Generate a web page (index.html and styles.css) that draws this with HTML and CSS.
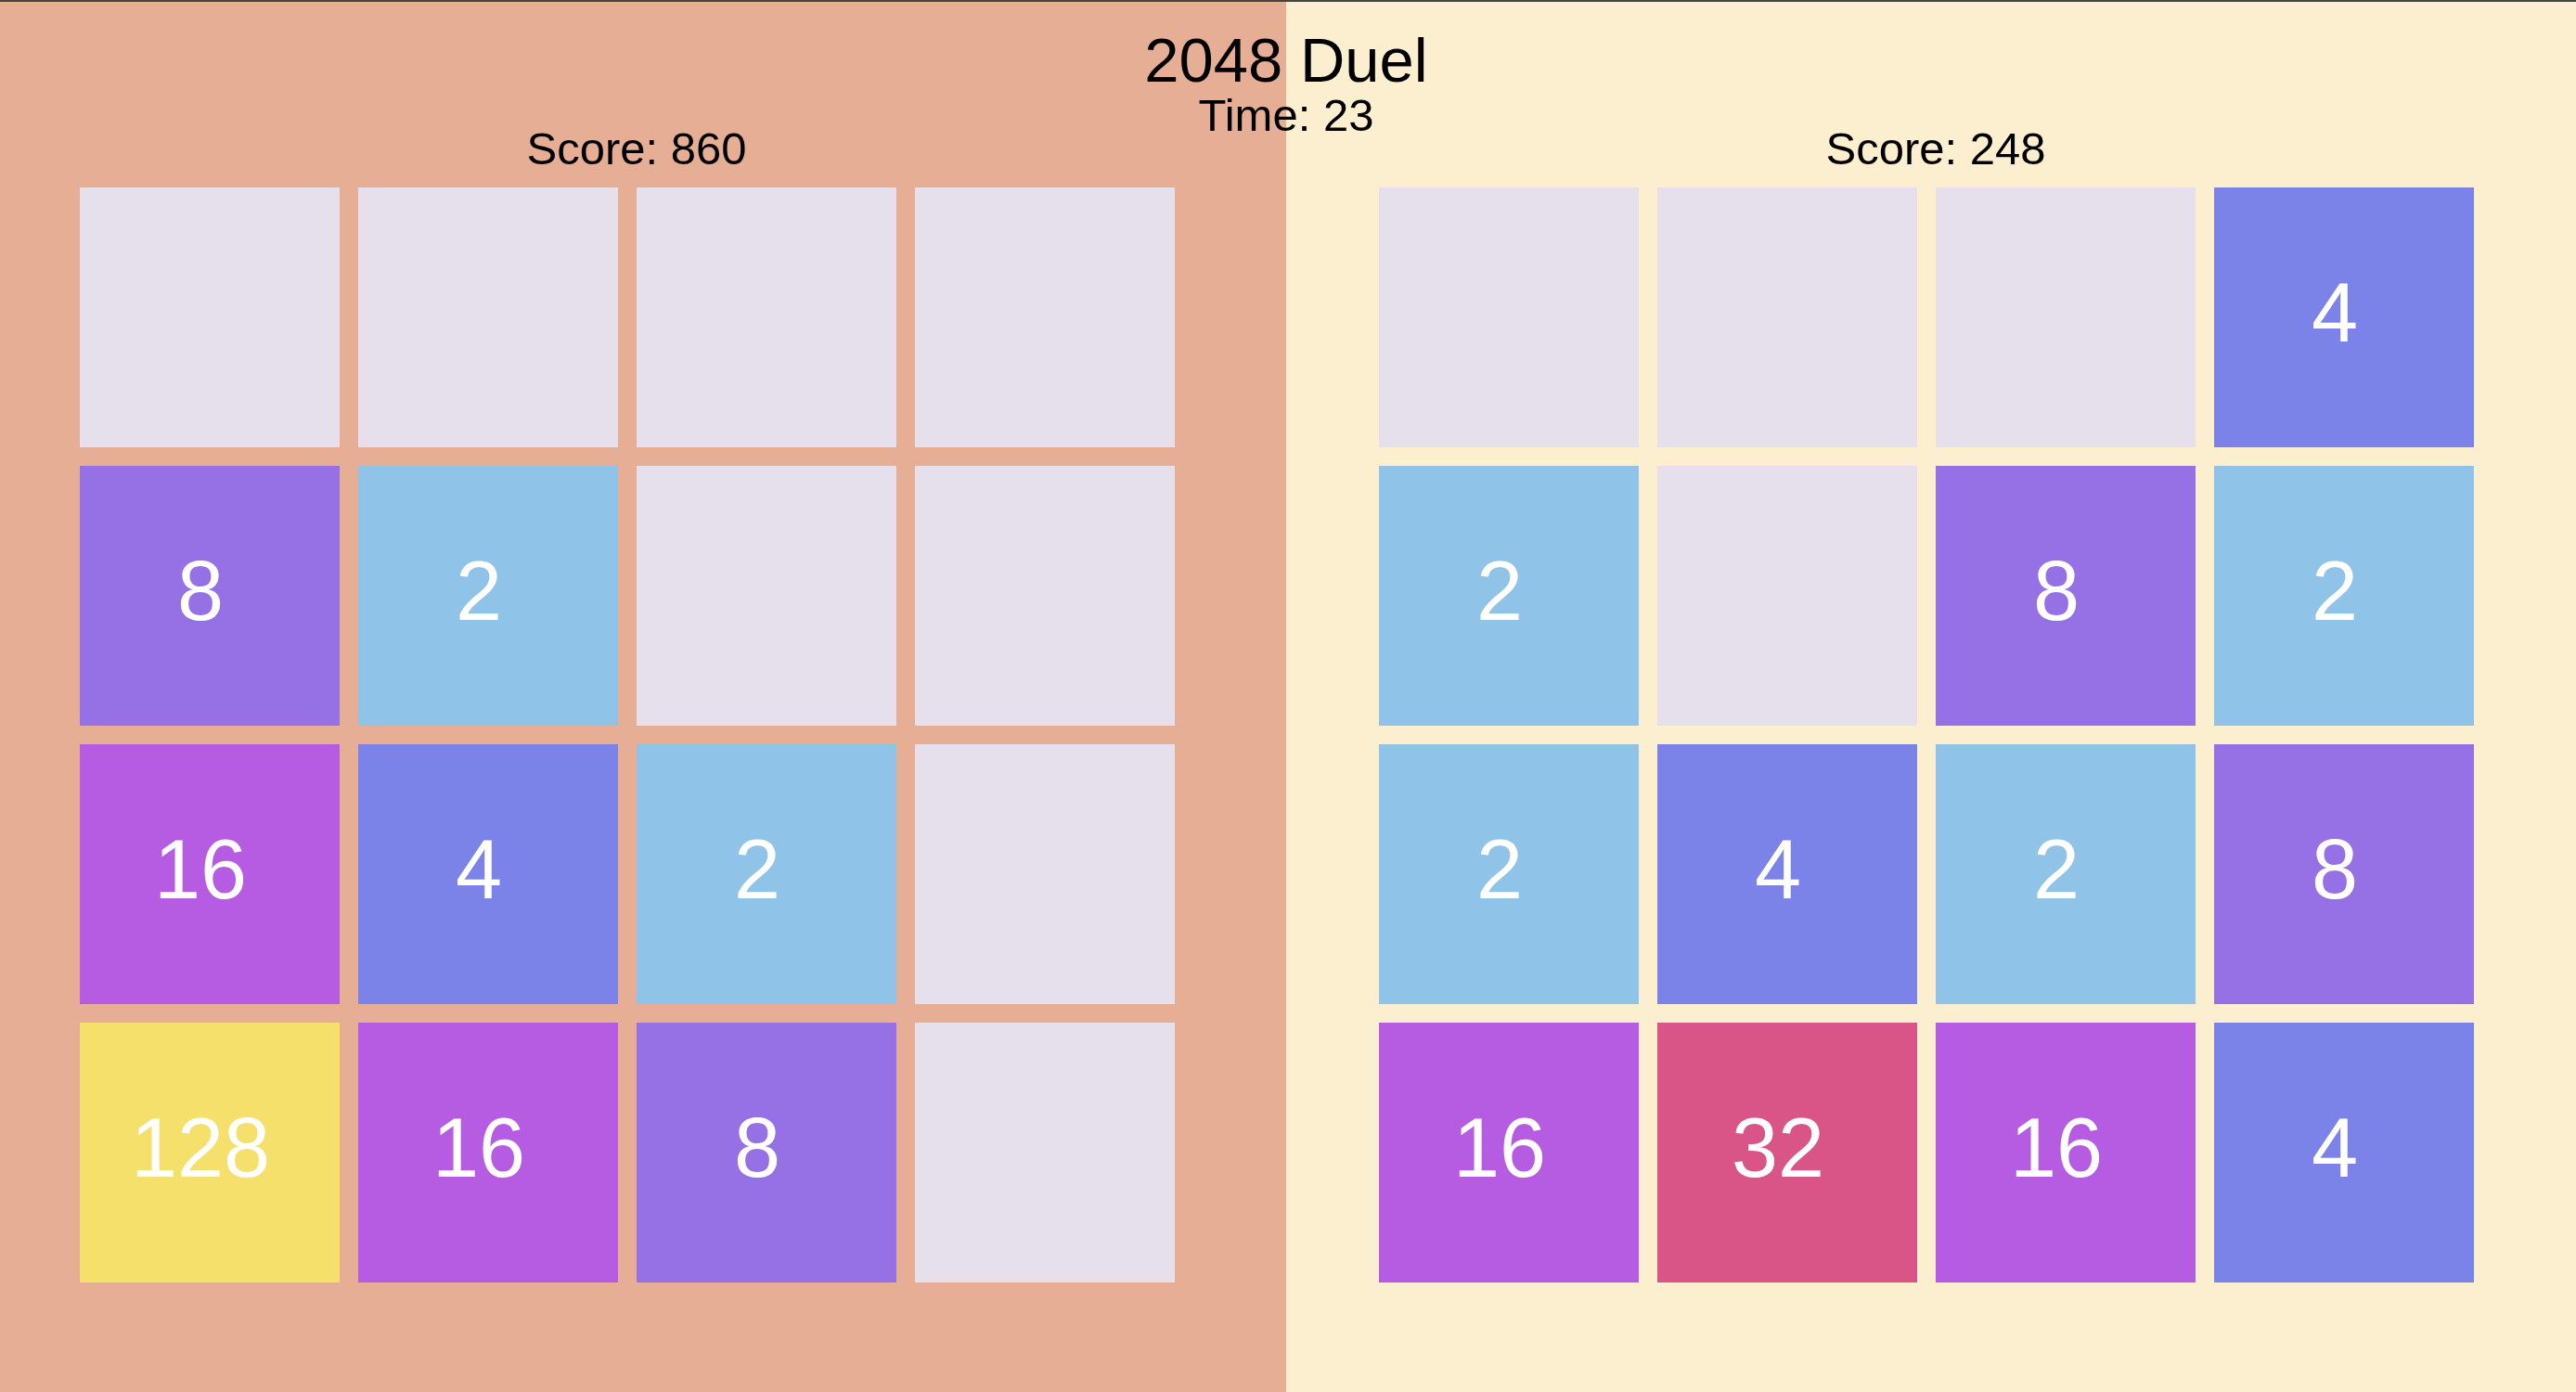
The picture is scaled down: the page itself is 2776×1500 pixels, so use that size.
FILE: index.html
```html
<!DOCTYPE html>
<html>
<head>
<meta charset="utf-8">
<title>2048 Duel</title>
<link rel="stylesheet" href="styles.css">
</head>
<body>
<div class="page">
  <div class="header">
    <div class="title">2048 Duel</div>
    <div class="timer">Time: 23</div>
  </div>

  <div class="side side-one">
    <div class="score">Score: 860</div>
    <div class="grid">
      <div class="tile"></div>
      <div class="tile"></div>
      <div class="tile"></div>
      <div class="tile"></div>
      <div class="tile t8">8</div>
      <div class="tile t2">2</div>
      <div class="tile"></div>
      <div class="tile"></div>
      <div class="tile t16">16</div>
      <div class="tile t4">4</div>
      <div class="tile t2">2</div>
      <div class="tile"></div>
      <div class="tile t128">128</div>
      <div class="tile t16">16</div>
      <div class="tile t8">8</div>
      <div class="tile"></div>
    </div>
  </div>

  <div class="side side-two">
    <div class="score">Score: 248</div>
    <div class="grid">
      <div class="tile"></div>
      <div class="tile"></div>
      <div class="tile"></div>
      <div class="tile t4">4</div>
      <div class="tile t2">2</div>
      <div class="tile"></div>
      <div class="tile t8">8</div>
      <div class="tile t2">2</div>
      <div class="tile t2">2</div>
      <div class="tile t4">4</div>
      <div class="tile t2">2</div>
      <div class="tile t8">8</div>
      <div class="tile t16">16</div>
      <div class="tile t32">32</div>
      <div class="tile t16">16</div>
      <div class="tile t4">4</div>
    </div>
  </div>
</div>
</body>
</html>
```

FILE: styles.css
```css
html, body{
margin:0;
padding:0;
}
body{
font-family:"Liberation Sans", Arial, Helvetica, sans-serif;
color:#000;
}
.page{
position:relative;
display:flex;
height:1500px;
box-sizing:border-box;
border-top:2px solid #444;
overflow:hidden;
}

/* title sits over both halves */
.header{
position:absolute;
top:29px;
left:0;
right:4px;
text-align:center;
}
.title{
font-size:67px;
line-height:1;
}
.timer{
font-size:49px;
line-height:1;
margin-top:2px;
}

.side{
box-sizing:border-box;
padding-top:134px;
}
.side-one{
width:1386px;
background:#e6ae94;
padding-left:86px;
}
.side-two{
flex:1;
background:#fcefd0;
padding-left:100px;
}

.score{
font-size:49px;
line-height:1;
text-align:center;
margin-bottom:17px;
width:1180px;
}
.side-one .score{
margin-left:-86px;
width:1372px;
}
.side-two .score{
margin-left:-90px;
width:1380px;
}

.grid{
display:grid;
grid-template-columns:repeat(4, 280px);
grid-auto-rows:280px;
gap:20px;
}
.tile{
display:flex;
align-items:center;
justify-content:center;
box-sizing:border-box;
padding:0 20px 10px 0;
background:#e6e0ec;
color:#fff;
font-size:90px;
}
.t2{ background:#8fc3e7; }
.t4{ background:#7b83e8; }
.t8{ background:#9670e5; }
.t16{ background:#b55ce3; }
.t32{ background:#da5587; }
.t128{ background:#f4e06a; }
```
